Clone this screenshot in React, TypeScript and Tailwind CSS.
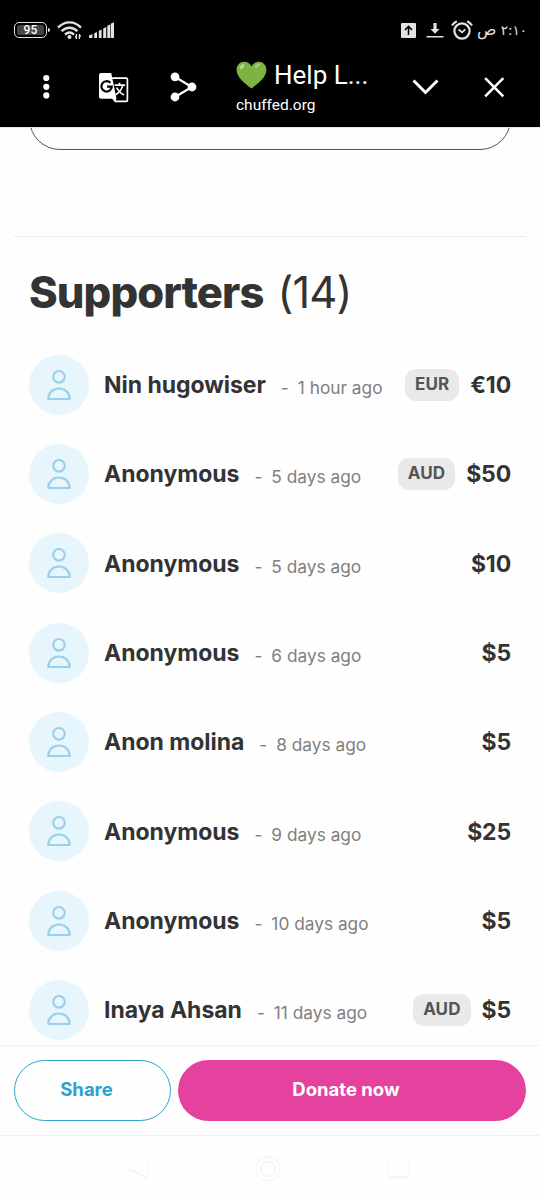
import React from 'react';

interface Supporter {
  name: string;
  time: string;
  amount: string;
  currency?: string;
}

const supporters: Supporter[] = [
  { name: 'Nin hugowiser', time: '1 hour ago', amount: '€10', currency: 'EUR' },
  { name: 'Anonymous', time: '5 days ago', amount: '$50', currency: 'AUD' },
  { name: 'Anonymous', time: '5 days ago', amount: '$10' },
  { name: 'Anonymous', time: '6 days ago', amount: '$5' },
  { name: 'Anon molina', time: '8 days ago', amount: '$5' },
  { name: 'Anonymous', time: '9 days ago', amount: '$25' },
  { name: 'Anonymous', time: '10 days ago', amount: '$5' },
  { name: 'Inaya Ahsan', time: '11 days ago', amount: '$5', currency: 'AUD' },
];

const StatusBar: React.FC = () => (
  <div className="flex h-[60px] shrink-0 items-center pl-3.5 pr-[13px] text-[#e2e2e2]">
    <div className="flex h-4 w-[33px] items-center justify-center rounded-[5px] border-[1.5px] border-[#e2e2e2] p-[2px]">
      <div className="flex h-full w-full items-center justify-center rounded-[2px] bg-[#444] font-[Roboto,sans-serif] text-[12px] font-medium tracking-[0.3px] text-white">
        95
      </div>
    </div>
    <div className="ml-px h-1 w-[2px] rounded-r bg-[#e2e2e2]"></div>
    <svg className="ml-[7px]" width="26" height="20" viewBox="0 0 26 20" fill="none" stroke="currentColor" strokeWidth="2.4">
      <path d="M1 7.6C7.6 .6 17.4 .6 24 7.6" />
      <path d="M4.6 11.2c4.6-4.6 11.2-4.6 15.8 0" />
      <path d="M8 14.6c2.8-2.6 6.2-2.6 9 0" />
      <circle cx="12.5" cy="17" r="2" fill="currentColor" stroke="none" />
      <path d="M19.4 14v5m3-5v5m-4.4-2h1.4m3-1h1.6" strokeWidth="1.3" />
    </svg>
    <svg className="ml-[6px]" width="26" height="18" viewBox="0 0 26 18" fill="currentColor">
      <path d="M0 14.6 3.4 13v4H0zM5.2 12.3 8 11V17H5.2zM9.8 9.8l2.8-1.3V17H9.8zM14.2 7.4l3-1.4V17h-3zM18.3 4.8l3.1-1.5V17h-3.1zM22 2.6 25 1.2V17h-3z" />
    </svg>
    <div className="ml-auto flex items-center">
      <svg width="15" height="15" viewBox="0 0 15 15">
        <rect width="15" height="15" rx="1" fill="#e2e2e2" />
        <path d="M7.5 12V3.5M4 7l3.5-3.6L11 7" fill="none" stroke="#000" strokeWidth="1.5" />
      </svg>
      <svg className="ml-[10px]" width="18" height="16" viewBox="0 0 18 16" fill="currentColor">
        <path d="M7.4 1h3.2v6h2.9L9 11.8 4.5 7h2.9zM.5 14h17v1.5H.5z" />
      </svg>
      <svg className="ml-[7px]" width="22" height="20" viewBox="0 0 22 20" fill="none" stroke="currentColor" strokeWidth="2.2">
        <circle cx="11" cy="11" r="7.6" />
        <path d="M7.6 9.4 11 12.4l3.4-3" strokeWidth="1.8" />
        <path d="M1 5.6C2 3.7 3.6 2.2 5.8 1.2M21 5.6c-1-1.9-2.6-3.4-4.8-4.4" />
      </svg>
      <div dir="rtl" className="ml-[4px] flex w-[50px] items-center justify-between whitespace-nowrap font-['DejaVu_Sans',sans-serif] leading-5">
        <span className="text-[13.5px] tracking-[-0.9px]">٢:١٠</span>
        <span className="text-[16px]">ص</span>
      </div>
    </div>
  </div>
);

const BrowserBar: React.FC = () => (
  <div className="flex h-[67px] shrink-0 pl-[42px] text-white">
    <svg className="mt-[14px]" width="9" height="26" viewBox="0 0 9 26" fill="currentColor">
      <circle cx="4.3" cy="4" r="3.1" />
      <circle cx="4.3" cy="12.8" r="3.1" />
      <circle cx="4.3" cy="21.4" r="3.1" />
    </svg>
    <svg className="ml-[47px] mt-[12px]" width="32" height="32" viewBox="0 0 32 32" fill="none">
      <path d="M13 6.2h15.2q1.2 0 1.2 1.2v20.8q0 1.2-1.2 1.2H17.5l-4-5" stroke="#fff" strokeWidth="1.7" />
      <path d="M3 1h10.2l5.3 25.5L17 30l-2.5-3.2H3q-2 0-2-2V3q0-2 2-2z" fill="#fff" />
      <path d="M12.4 10.8A5.2 5.2 0 1 0 13.8 14.6H9" stroke="#000" strokeWidth="2.1" />
      <path d="M16.6 13.2H27M21.5 10.8v2.4M24.8 13.4c-1 4-3.6 7.2-7 9.4M18.6 15.5c1.4 3 4.2 5.8 7.4 7.5" stroke="#fff" strokeWidth="1.7" />
    </svg>
    <svg className="ml-[40px] mt-[11px]" width="28" height="32" viewBox="0 0 28 32" fill="#fff">
      <path d="M5 6l17 10L5 26" fill="none" stroke="#fff" strokeWidth="2.2" />
      <circle cx="5" cy="5.8" r="4.4" />
      <circle cx="22" cy="16" r="4.4" />
      <circle cx="5" cy="26" r="4.4" />
    </svg>
    <div className="-mt-px ml-[38px] w-[134px] font-[Roboto,sans-serif]">
      <div className="flex h-8 items-center whitespace-nowrap text-[26px] leading-8">
        <svg className="mr-[7px] shrink-0" width="31" height="28" viewBox="0 0 31 28">
          <path d="M15.5 27.5C9 22.5.6 16.5.6 8.7.6 4 4 .7 8.3.7c3.3 0 6 2 7.2 4.8C16.7 2.7 19.4.7 22.7.7c4.3 0 7.7 3.3 7.7 8 0 7.8-8.4 13.8-14.9 18.8z" fill="#7cb342" />
          <ellipse cx="6" cy="5.6" rx="3" ry="1.7" transform="rotate(-42 6 5.6)" fill="#b5d987" />
          <ellipse cx="21.5" cy="4.6" rx="3" ry="1.5" transform="rotate(-32 21.5 4.6)" fill="#a5cf72" />
        </svg>
        Help L...
      </div>
      <div className="mt-[4px] text-[15.5px] leading-5">chuffed.org</div>
    </div>
    <svg className="ml-[42px] mt-[18px]" width="27" height="18" viewBox="0 0 27 18" fill="none" stroke="currentColor" strokeWidth="2.9">
      <path d="M1.5 2.5 13.5 14.5l12-12" />
    </svg>
    <svg className="ml-[45px] mt-[17px]" width="21" height="21" viewBox="0 0 21 21" fill="none" stroke="currentColor" strokeWidth="2.6">
      <path d="M1.2 1.2 19.3 19.3M19.3 1.2 1.2 19.3" />
    </svg>
  </div>
);

const SupporterRow: React.FC<{ supporter: Supporter }> = ({ supporter }) => (
  <li className="flex h-[89.35px] shrink-0 items-center whitespace-nowrap">
    <div className="flex size-[60px] shrink-0 items-center justify-center rounded-full bg-[#e7f5fc]">
      <svg className="text-[#9ad0ea]" width="24" height="32" viewBox="0 0 24 32" fill="none" stroke="currentColor" strokeWidth="2.2" strokeLinejoin="round">
        <circle cx="12" cy="7.8" r="5.8" />
        <path d="M1.3 30c0-6 4.5-10.5 10.7-10.5S22.7 24 22.7 30z" />
      </svg>
    </div>
    <div className="ml-[15px] flex items-baseline pt-px">
      <span className="text-[23px] font-bold tracking-[-0.03px] text-[#333]">{supporter.name}</span>
      <span className="ml-[15px] translate-y-px text-[17.3px] text-[#808080]">-</span>
      <span className="ml-[9px] translate-y-px text-[17.3px] text-[#808080]">{supporter.time}</span>
    </div>
    <div className="ml-auto flex items-center">
      {supporter.currency && (
        <span className="mr-[11px] flex h-8 items-center rounded-[11px] bg-[#e9e9e9] px-[10px] text-[17px] font-bold tracking-[0.1px] text-[#555]">
          {supporter.currency}
        </span>
      )}
      <span className="pt-px text-[23px] font-bold tracking-[-0.15px] text-[#333]">{supporter.amount}</span>
    </div>
  </li>
);

const App: React.FC = () => {
  return (
    <div className="flex h-[1200px] w-[540px] flex-col overflow-hidden bg-[#fefefe] font-['Inter',sans-serif]">
      <header className="flex h-[127px] shrink-0 flex-col bg-black">
        <StatusBar />
        <BrowserBar />
      </header>

      <main className="h-[918px] shrink-0 overflow-hidden border-t border-[#f5e6ee]">
        {/* bottom edge of the card scrolled under the toolbar */}
        <div className="h-[22px] overflow-hidden px-[29px]">
          <div className="-mt-[50px] h-[72px] rounded-[31px] border border-[#555]"></div>
        </div>
        <hr className="mx-3.5 mt-[86px] border-[#ececec]" />
        <section className="px-[29px]">
          <h2 className="mt-[27px] flex h-14 items-center whitespace-nowrap text-[43.5px] leading-[56px] text-[#333]">
            <span className="font-extrabold tracking-[-0.9px]">Supporters</span>
            <span className="ml-[14px] tracking-[-0.9px]">(14)</span>
          </h2>
          <ul className="mt-[20px] flex flex-col">
            {supporters.map((supporter, i) => (
              <SupporterRow key={i} supporter={supporter} />
            ))}
          </ul>
        </section>
      </main>

      <div className="flex h-[91px] shrink-0 gap-[7px] border-y border-[#f1f1f1] px-3.5 pt-[14px] text-[18.5px] font-bold">
        <button className="h-[61px] w-[157px] rounded-full border border-[#30a3cc] pb-[2px] pr-3 text-[#2ba3d1]">Share</button>
        <button className="h-[61px] flex-1 rounded-full bg-[#e5429f] pb-[2px] pr-3 text-white">Donate now</button>
      </div>

      <nav className="flex flex-1 items-center pl-[129px] text-[#f1f1f1]">
        <svg width="20" height="24" viewBox="0 0 20 24" fill="none" stroke="currentColor">
          <path d="M0 13 18 22" strokeWidth="1.5" />
          <path d="M18.5 4v18" strokeWidth=".5" />
        </svg>
        <svg className="ml-[106px]" width="26" height="28" viewBox="0 0 26 28" fill="none" stroke="currentColor">
          <circle cx="13" cy="15" r="12" />
          <circle cx="13" cy="15" r="7.5" />
        </svg>
        <svg className="ml-[107px]" width="21" height="22" viewBox="0 0 21 22" fill="none" stroke="currentColor">
          <path d="M.5 2v16q0 2 2 2h16q2 0 2-2V2" strokeWidth=".6" />
          <path d="M1 19.5q.7 1 2 1h15q1.3 0 2-1" strokeWidth="1.5" />
        </svg>
      </nav>
    </div>
  );
};

export default App;
